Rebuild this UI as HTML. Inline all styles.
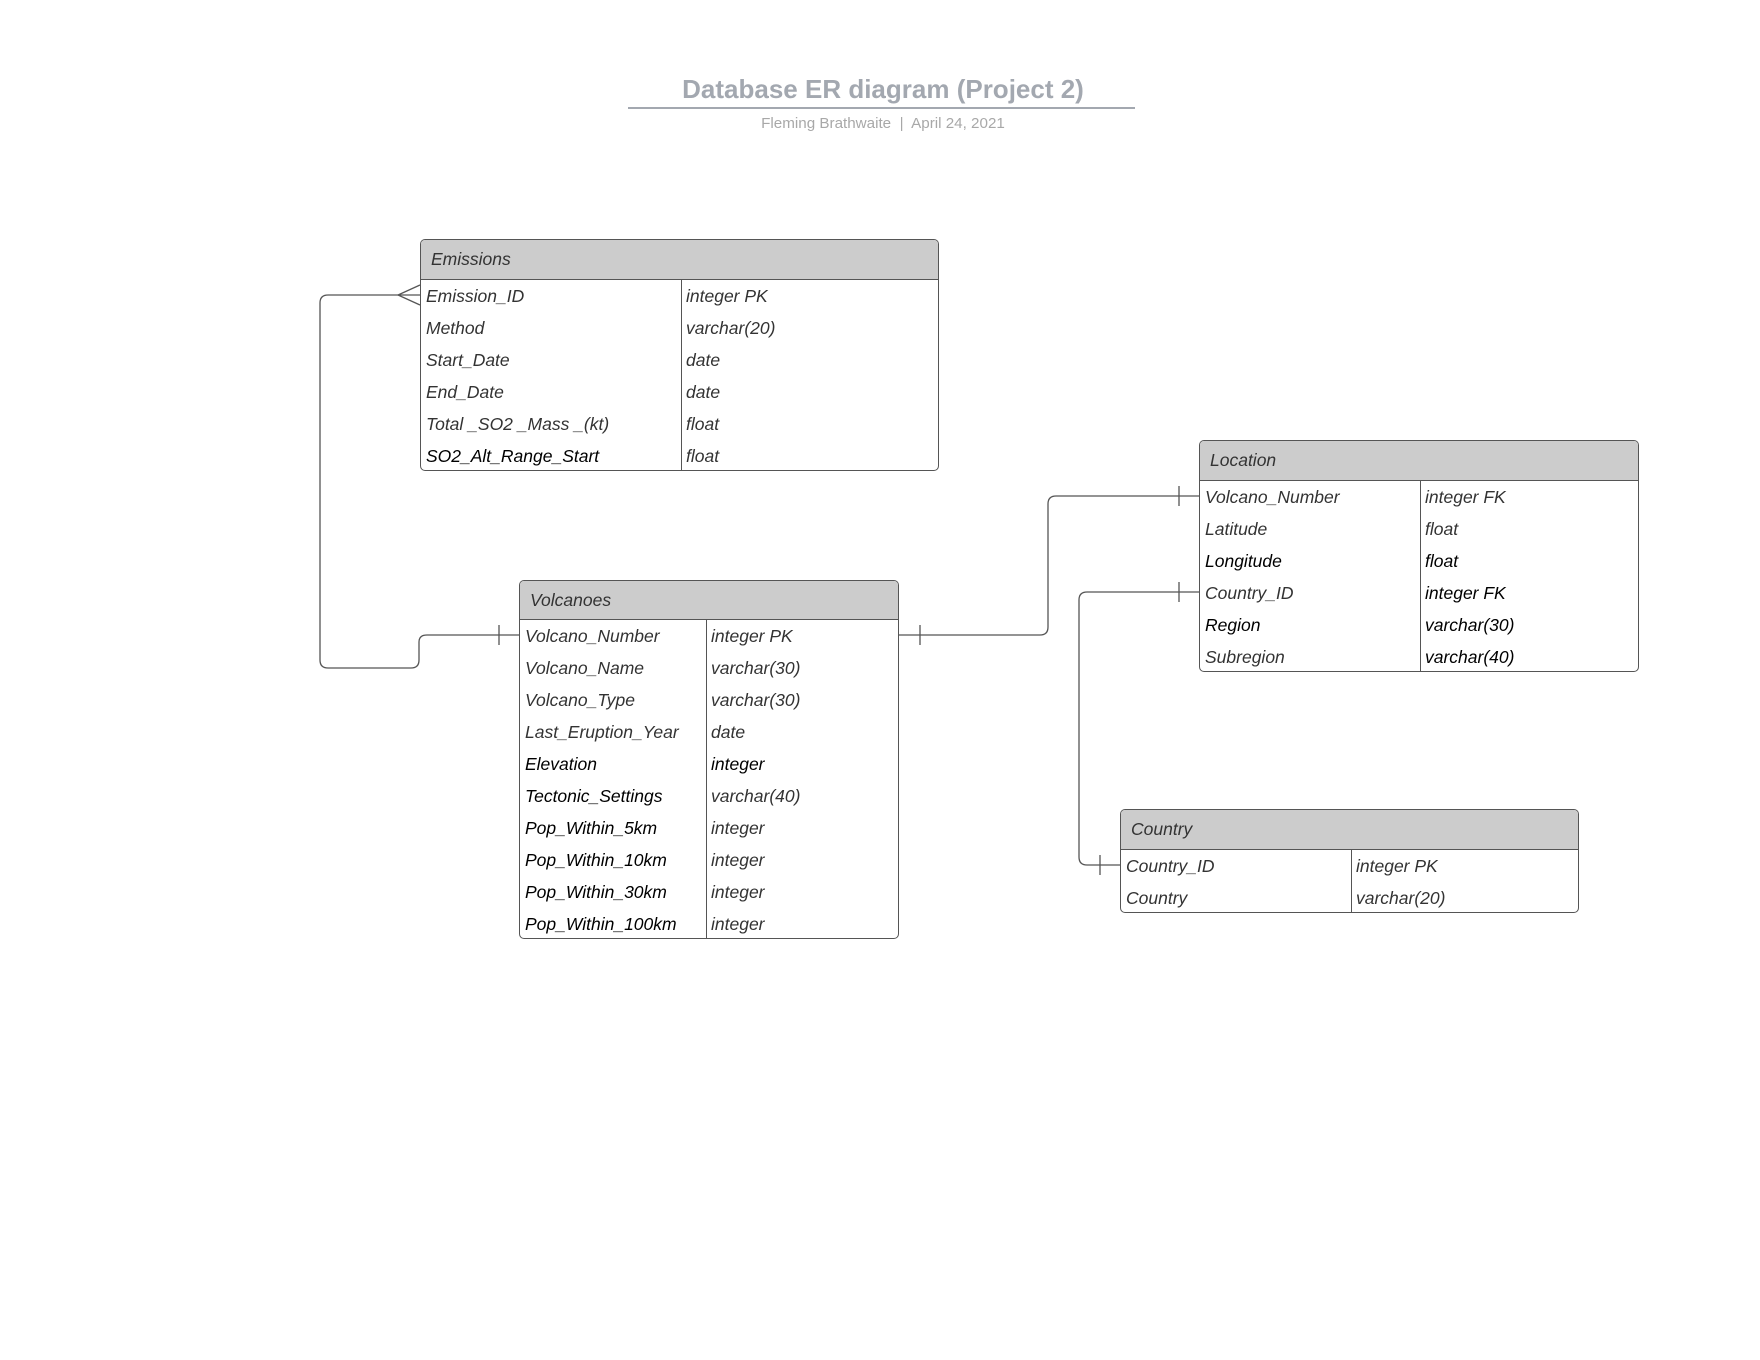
<!DOCTYPE html>
<html><head><meta charset="utf-8"><style>
body{margin:0;width:1760px;height:1360px;background:#fff;position:relative;overflow:hidden;font-family:"Liberation Sans",sans-serif}
.t{position:absolute;border:1.3px solid #555;border-radius:5px;box-sizing:border-box;background:#fff;overflow:hidden}
.h{background:#cccccc;border-bottom:1.3px solid #555;box-sizing:border-box;font-style:italic;font-size:17.5px;color:#333;padding-left:10px;display:flex;align-items:center}
.r{height:32px;display:flex;align-items:center;font-style:italic;font-size:17.5px;color:#333;position:relative}
.r span{position:absolute}
.v{position:absolute;top:0;bottom:0;border-left:1.3px solid #555}
.k{color:#000}
</style></head><body>
<div style="position:absolute;left:580px;width:606px;top:74px;text-align:center;font-weight:bold;font-size:26px;color:#a3a8b0">Database ER diagram (Project 2)</div>
<div style="position:absolute;left:628px;width:507px;top:107px;border-top:2px solid #a3a8b0"></div>
<div style="position:absolute;left:580px;width:606px;top:115px;text-align:center;font-size:15.2px;color:#a8a8a8">Fleming Brathwaite &nbsp;|&nbsp; April 24, 2021</div>

<!-- Emissions -->
<div class="t" style="left:420px;top:239px;width:519px;height:232px">
<div class="h" style="height:40px">Emissions</div>
<div class="v" style="left:260px;top:39px"></div>
<div class="r"><span style="left:5px">Emission_ID</span><span style="left:265px">integer PK</span></div>
<div class="r"><span style="left:5px">Method</span><span style="left:265px">varchar(20)</span></div>
<div class="r"><span style="left:5px">Start_Date</span><span style="left:265px">date</span></div>
<div class="r"><span style="left:5px">End_Date</span><span style="left:265px">date</span></div>
<div class="r"><span style="left:5px">Total _SO2 _Mass _(kt)</span><span style="left:265px">float</span></div>
<div class="r"><span style="left:5px" class="k">SO2_Alt_Range_Start</span><span style="left:265px">float</span></div>
</div>

<!-- Volcanoes -->
<div class="t" style="left:519px;top:580px;width:380px;height:359px">
<div class="h" style="height:39px">Volcanoes</div>
<div class="v" style="left:186px;top:38px"></div>
<div class="r"><span style="left:5px">Volcano_Number</span><span style="left:191px">integer PK</span></div>
<div class="r"><span style="left:5px">Volcano_Name</span><span style="left:191px">varchar(30)</span></div>
<div class="r"><span style="left:5px">Volcano_Type</span><span style="left:191px">varchar(30)</span></div>
<div class="r"><span style="left:5px">Last_Eruption_Year</span><span style="left:191px">date</span></div>
<div class="r"><span style="left:5px" class="k">Elevation</span><span style="left:191px" class="k">integer</span></div>
<div class="r"><span style="left:5px" class="k">Tectonic_Settings</span><span style="left:191px">varchar(40)</span></div>
<div class="r"><span style="left:5px" class="k">Pop_Within_5km</span><span style="left:191px">integer</span></div>
<div class="r"><span style="left:5px" class="k">Pop_Within_10km</span><span style="left:191px">integer</span></div>
<div class="r"><span style="left:5px" class="k">Pop_Within_30km</span><span style="left:191px">integer</span></div>
<div class="r"><span style="left:5px" class="k">Pop_Within_100km</span><span style="left:191px">integer</span></div>
</div>

<!-- Location -->
<div class="t" style="left:1199px;top:440px;width:440px;height:232px">
<div class="h" style="height:40px">Location</div>
<div class="v" style="left:220px;top:39px"></div>
<div class="r"><span style="left:5px">Volcano_Number</span><span style="left:225px">integer FK</span></div>
<div class="r"><span style="left:5px">Latitude</span><span style="left:225px">float</span></div>
<div class="r"><span style="left:5px" class="k">Longitude</span><span style="left:225px" class="k">float</span></div>
<div class="r"><span style="left:5px">Country_ID</span><span style="left:225px" class="k">integer FK</span></div>
<div class="r"><span style="left:5px" class="k">Region</span><span style="left:225px" class="k">varchar(30)</span></div>
<div class="r"><span style="left:5px">Subregion</span><span style="left:225px" class="k">varchar(40)</span></div>
</div>

<!-- Country -->
<div class="t" style="left:1120px;top:809px;width:459px;height:104px">
<div class="h" style="height:40px">Country</div>
<div class="v" style="left:230px;top:39px"></div>
<div class="r"><span style="left:5px">Country_ID</span><span style="left:235px">integer PK</span></div>
<div class="r"><span style="left:5px">Country</span><span style="left:235px">varchar(20)</span></div>
</div>

<svg width="1760" height="1360" style="position:absolute;left:0;top:0" fill="none" stroke="#555" stroke-width="1.3">
<path d="M420 295 H328 Q320 295 320 303 V660 Q320 668 328 668 H411 Q419 668 419 660 V642 Q419 635 427 635 H519"/>
<path d="M420 285 L398 295 L420 305"/>
<path d="M499 625 V645"/>
<path d="M899 635 H1040 Q1048 635 1048 627 V504 Q1048 496 1056 496 H1199"/>
<path d="M920 625 V645"/>
<path d="M1179 486 V506"/>
<path d="M1199 592 H1087 Q1079 592 1079 600 V857 Q1079 865 1087 865 H1120"/>
<path d="M1179 582 V602"/>
<path d="M1100 855 V875"/>
</svg>
</body></html>
